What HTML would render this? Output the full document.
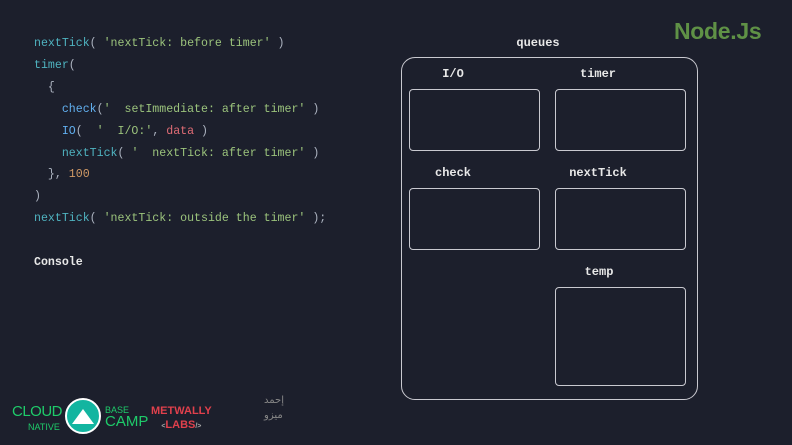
<!DOCTYPE html>
<html><head><style>
body{margin:0;width:792px;height:445px;background:#1c1f2c;overflow:hidden;position:relative;font-family:"Liberation Mono",monospace}
.code{position:absolute;left:34px;top:33px;font-size:11.6px;line-height:21.9px;color:#abb2bf;white-space:pre}
.c{color:#4fb3c0}.b{color:#61afef}.s{color:#9bc37c}.r{color:#e06c75}.o{color:#d19a66}
.lbl{position:absolute;font-weight:bold;font-size:12px;color:#e8e8e8;transform:translateX(-50%);font-family:"Liberation Mono",monospace}
.box{position:absolute;border:1px solid #c9c9d0;border-radius:4px}
</style></head><body>
<div class="code"><span class="c">nextTick</span>( <span class="s">'nextTick: before timer'</span> )
<span class="c">timer</span>(
  {
    <span class="b">check</span>(<span class="s">'  setImmediate: after timer'</span> )
    <span class="b">IO</span>(  <span class="s">'  I/O:'</span>, <span class="r">data</span> )
    <span class="c">nextTick</span>( <span class="s">'  nextTick: after timer'</span> )
  }, <span class="o">100</span>
)
<span class="c">nextTick</span>( <span class="s">'nextTick: outside the timer'</span> );

<b style="color:#e8e8e8">Console</b></div>
<div style="position:absolute;left:674px;top:18px;font-family:'Liberation Sans',sans-serif;font-weight:bold;font-size:23px;color:#5f9146;letter-spacing:-0.3px">Node.Js</div>
<div class="lbl" style="left:538px;top:36px">queues</div>
<div class="box" style="left:401px;top:57px;width:295px;height:341px;border-radius:14px"></div>
<div class="lbl" style="left:453px;top:67px">I/O</div>
<div class="lbl" style="left:598px;top:67px">timer</div>
<div class="lbl" style="left:453px;top:166px">check</div>
<div class="lbl" style="left:598px;top:166px">nextTick</div>
<div class="lbl" style="left:599px;top:265px">temp</div>
<div class="box" style="left:409px;top:89px;width:129px;height:60px"></div>
<div class="box" style="left:555px;top:89px;width:129px;height:60px"></div>
<div class="box" style="left:409px;top:188px;width:129px;height:60px"></div>
<div class="box" style="left:555px;top:188px;width:129px;height:60px"></div>
<div class="box" style="left:555px;top:287px;width:129px;height:97px"></div>
<div style="position:absolute;left:12px;top:405px;font-family:'Liberation Sans',sans-serif;color:#1ecb6a;font-size:15px;line-height:14px;letter-spacing:-0.5px">CLOUD<br><span style="font-size:9px;padding-left:16px;letter-spacing:0">NATIVE</span></div>
<div style="position:absolute;left:65px;top:398px;width:32px;height:32px;border-radius:50%;background:#12b5a0;border:2px solid #fff"><div style="position:absolute;left:5px;top:9px;width:0;height:0;border-left:11px solid transparent;border-right:11px solid transparent;border-bottom:15px solid #fff"></div></div>
<div style="position:absolute;left:105px;top:405px;font-family:'Liberation Sans',sans-serif;color:#1ecb6a;font-size:9px;line-height:11px">BASE<br><span style="font-size:15px">CAMP</span></div>
<div style="position:absolute;left:151px;top:404px;font-family:'Liberation Sans',sans-serif;font-weight:bold;color:#e0404c;font-size:11px;line-height:14px;text-align:center">METWALLY<br><span style="font-size:7px;color:#aaa">&lt;</span>LABS<span style="font-size:7px;color:#aaa">/&gt;</span></div>
<div style="position:absolute;left:264px;top:393px;color:#888;font-size:10px;line-height:15px;font-family:'DejaVu Sans',sans-serif">إحمد<br>ميزو</div>
</body></html>
